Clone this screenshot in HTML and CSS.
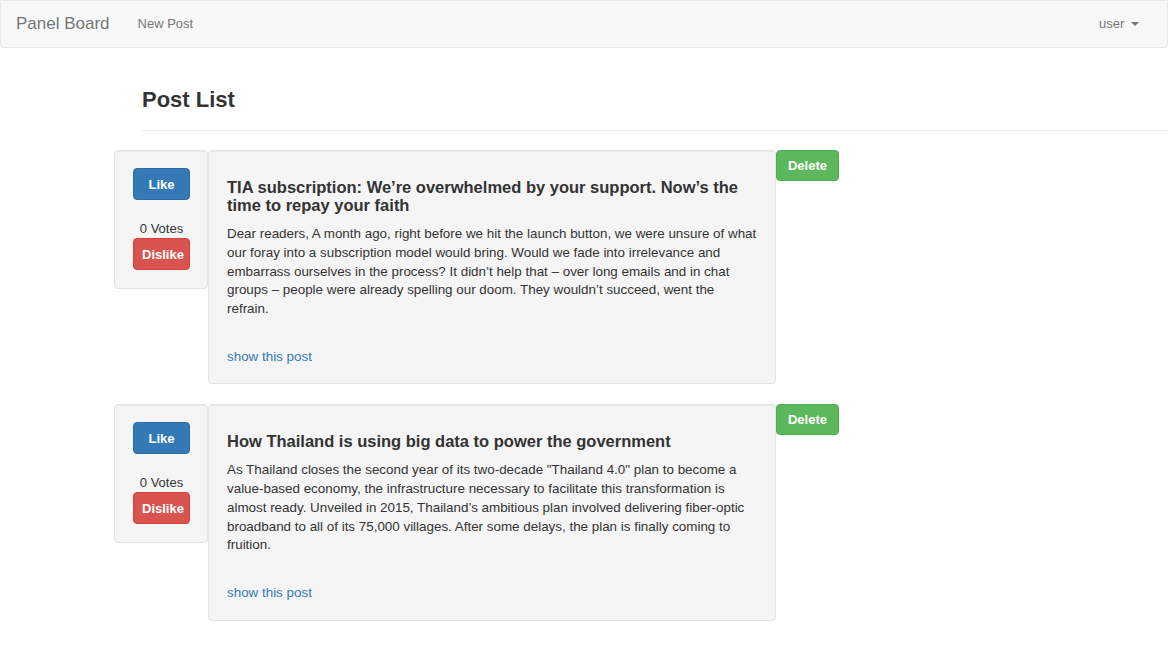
FILE: index.html
```html
<!DOCTYPE html>
<html>
<head>
<meta charset="utf-8">
<link rel="stylesheet" href="styles.css">
</head>
<body>
<nav class="navbar">
  <a class="brand" href="#">Panel Board</a>
  <a class="nav-link" href="#">New Post</a>
  <span class="spacer"></span>
  <a class="nav-link user" href="#">user <span class="caret"></span></a>
</nav>
<main class="main">
  <div class="page-header"><h3>Post List</h3></div>
  <div class="post-row">
    <div class="well vote">
      <button class="btn btn-primary">Like</button>
      <div class="votes">0 Votes</div>
      <button class="btn btn-danger">Dislike</button>
    </div>
    <div class="well post">
      <h4>TIA subscription: We’re overwhelmed by your support. Now’s the time to repay your faith</h4>
      <p>Dear readers, A month ago, right before we hit the launch button, we were unsure of what our foray into a subscription model would bring. Would we fade into irrelevance and embarrass ourselves in the process? It didn’t help that – over long emails and in chat groups – people were already spelling our doom. They wouldn’t succeed, went the refrain.</p>
      <a class="show" href="#">show this post</a>
    </div>
    <button class="btn btn-success">Delete</button>
  </div>
  <div class="post-row">
    <div class="well vote">
      <button class="btn btn-primary">Like</button>
      <div class="votes">0 Votes</div>
      <button class="btn btn-danger">Dislike</button>
    </div>
    <div class="well post">
      <h4>How Thailand is using big data to power the government</h4>
      <p>As Thailand closes the second year of its two-decade "Thailand 4.0" plan to become a value-based economy, the infrastructure necessary to facilitate this transformation is almost ready. Unveiled in 2015, Thailand’s ambitious plan involved delivering fiber-optic broadband to all of its 75,000 villages. After some delays, the plan is finally coming to fruition.</p>
      <a class="show" href="#">show this post</a>
    </div>
    <button class="btn btn-success">Delete</button>
  </div>
</main>
</body>
</html>
```

FILE: styles.css
```css
* { box-sizing: border-box; }
html, body { margin: 0; padding: 0; }
body {
  font-family: "Liberation Sans", Arial, Helvetica, sans-serif;
  font-size: 13px;
  line-height: 1.43;
  color: #333;
  background: #fff;
}
a { text-decoration: none; }

.navbar {
  display: flex;
  align-items: center;
  height: 48px;
  background: #f8f8f8;
  border: 1px solid #e7e7e7;
  border-radius: 0 0 4px 4px;
}
.brand {
  color: #777;
  font-size: 17px;
  padding: 0 14px 0 15px;
}
.nav-link {
  color: #777;
  font-size: 13px;
  padding: 0 14px;
}
.spacer { flex: 1; }
.user { padding-right: 28px; }
.caret {
  display: inline-block;
  width: 0; height: 0;
  margin-left: 3px;
  vertical-align: middle;
  border-top: 4px solid #777;
  border-left: 4px solid transparent;
  border-right: 4px solid transparent;
}

.main { padding-left: 114px; }
.page-header {
  margin: 0 0 19px 28px;
  padding: 37px 0 15px;
  border-bottom: 1px solid #eee;
}
.page-header h3 {
  margin: 0;
  font-size: 22px;
  font-weight: 600;
  line-height: 30px;
  color: #333;
}

.post-row {
  display: flex;
  align-items: flex-start;
  margin-bottom: 20px;
}
.well {
  background: #f5f5f5;
  border: 1px solid #e3e3e3;
  border-radius: 4px;
  box-shadow: inset 0 1px 1px rgba(0,0,0,.05);
}
.vote {
  width: 94px;
  padding: 17px 18px 18px;
  display: flex;
  flex-direction: column;
  align-items: flex-start;
}
.vote .votes {
  width: 57px;
  text-align: center;
  margin-top: 20px;
  line-height: 18px;
}
.post {
  width: 568px;
  padding: 17px 18px 17px;
}
.post h4 {
  margin: 10px 0 11px;
  font-size: 16.5px;
  font-weight: 600;
  line-height: 18px;
  color: #333;
}
.post p {
  margin: 0 0 29px;
  font-size: 13.4px;
  line-height: 18.75px;
}
.show {
  color: #337ab7;
  font-size: 13.4px;
  line-height: 18px;
  display: inline-block;
}

.btn {
  font-family: inherit;
  font-size: 13px;
  font-weight: 600;
  color: #fff;
  border: 1px solid transparent;
  border-radius: 4px;
  height: 32px;
  padding: 0 8px;
  cursor: pointer;
}
.btn-primary { background: #337ab7; border-color: #2e6da4; width: 57px; }
.btn-danger { background: #d9534f; border-color: #d43f3a; width: 57px; }
.btn-success { background: #5cb85c; border-color: #4cae4c; width: 63px; height: 31px; }
```
